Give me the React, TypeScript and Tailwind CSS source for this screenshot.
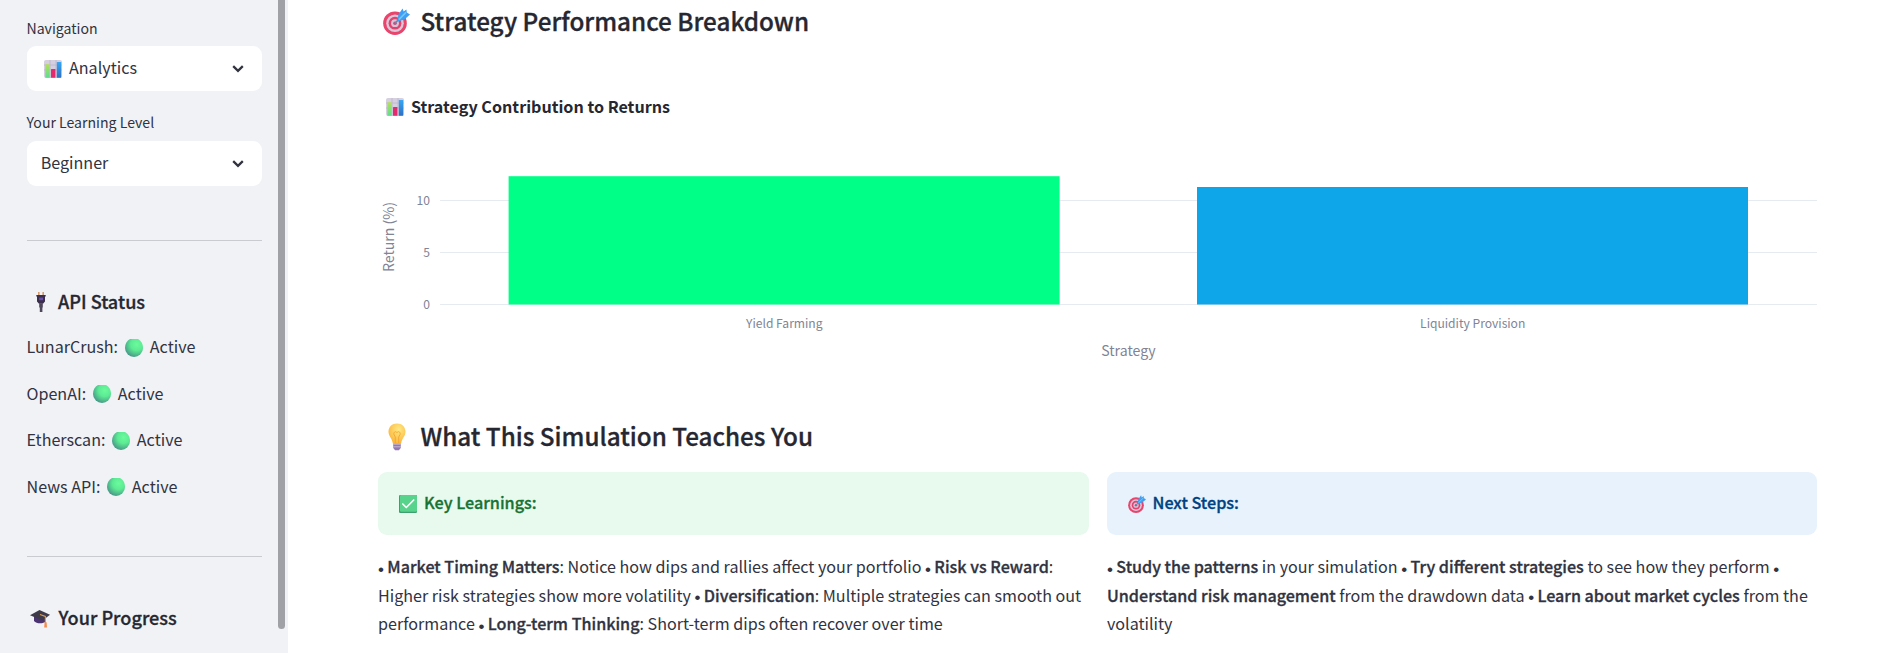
import React from "react";

function ChartEmoji() {
  return (
    <svg viewBox="0 0 18 18" className="size-[18px] shrink-0">
      <defs>
        <linearGradient id="bar-g" x1="0" y1="0" x2="0" y2="1"><stop offset="0" stopColor="#b5e05a" /><stop offset="1" stopColor="#5cdd92" /></linearGradient>
        <linearGradient id="bar-b" x1="0" y1="0" x2="0" y2="1"><stop offset="0" stopColor="#35a7f5" /><stop offset="1" stopColor="#2f6fc4" /></linearGradient>
      </defs>
      <rect x="0" y="0" width="18" height="18" rx="2" fill="#d5cfdf" />
      <path d="M6 0V18M12 0V18M0 5H18M0 10H18" stroke="#bdb5cb" strokeWidth=".8" />
      <rect x="1.3" y="4.2" width="4.4" height="13.6" rx=".6" fill="url(#bar-g)" />
      <rect x="7" y="9" width="4.4" height="8.8" rx=".6" fill="#e22a6c" />
      <rect x="12.8" y="2" width="4.4" height="15.8" rx=".6" fill="url(#bar-b)" />
    </svg>
  );
}

function TargetEmoji({ className }: { className: string }) {
  return (
    <svg viewBox="0 0 27 27" className={className}>
      <circle cx="12" cy="15.2" r="11.8" fill="#e8446c" />
      <circle cx="12" cy="15.2" r="8.8" fill="#dcc6d8" />
      <circle cx="12" cy="15.2" r="6.4" fill="#e0436f" />
      <circle cx="12" cy="15.2" r="3.9" fill="#d9c2d6" />
      <circle cx="12" cy="15.2" r="1.8" fill="#c0507c" />
      <path d="M12 15.2L18 9" stroke="#6f86ad" strokeWidth="1.6" />
      <path d="M14.4 13.4L15.4 6.4L19.6 .4L20.6 3.6L23.4 1.6L23.8 4.6L27 6.6L21.4 11.4Z" fill="#3f9ff2" />
      <path d="M15.8 11.6L23 4.4" stroke="#74c6fb" strokeWidth="1.5" />
    </svg>
  );
}

function BulbEmoji() {
  return (
    <svg viewBox="0 0 18 28" className="h-[28px] w-[18px] shrink-0">
      <defs>
        <radialGradient id="bulb" cx=".6" cy=".3" r=".75"><stop offset="0" stopColor="#ffe884" /><stop offset="1" stopColor="#fbb337" /></radialGradient>
      </defs>
      <path d="M9 .5C4 .5 .5 4 .5 8.7C.5 13.2 4 15 4.9 20.5H13.1C14 15 17.5 13.2 17.5 8.7C17.5 4 14 .5 9 .5Z" fill="url(#bulb)" />
      <path d="M7.3 20V14L5.8 11.2C5.6 8.8 8 7.8 9 9.6C10 7.8 12.4 8.8 12.2 11.2L10.7 14V20" fill="none" stroke="#f3a52f" strokeWidth=".9" />
      <path d="M5.2 20.5H12.8V24.5C12.8 25.5 11.5 26 11 27.3H7C6.5 26 5.2 25.5 5.2 24.5Z" fill="#9478b0" />
      <path d="M5.2 21.2H12.8M5.2 23.8H12.8" stroke="#cdbfd6" strokeWidth=".9" />
    </svg>
  );
}

function PlugEmoji() {
  return (
    <svg viewBox="0 0 10 20" className="h-[20px] w-[10px] shrink-0">
      <path d="M2.8 0V4M7.2 0V4" stroke="#d99a6c" strokeWidth="1.6" />
      <path d="M.3 3H9.7V4.5H9V9.5L7 11.8H3L1 9.5V4.5H.3Z" fill="#3b2f4c" />
      <rect x="3.2" y="5.6" width="3.8" height="2.6" fill="#6a4fae" />
      <path d="M3.2 11.5H6.8V15.5H6.4V20H3.8V15.5H3.2Z" fill="#4f475a" />
    </svg>
  );
}

function CapEmoji() {
  return (
    <svg viewBox="0 0 20 18" className="h-[18px] w-[20px] shrink-0">
      <path d="M4 7V11C6.5 14 13 14 16 11.5V7Z" fill="#4b3270" />
      <path d="M0 5.2L9.5 0L20 4.8L12.5 10.4Z" fill="#3f3a4a" />
      <path d="M10 4.4L15.4 6.4V13" fill="none" stroke="#dfa04e" strokeWidth="1.1" />
      <path d="M14.6 12.3H16.6L17 17.6H14.2Z" fill="#f58a4b" />
    </svg>
  );
}

function CheckEmoji() {
  return (
    <svg viewBox="0 0 18 18" className="size-[18px] shrink-0">
      <rect width="18" height="18" rx="1.3" fill="#3f9f70" />
      <rect x="1" width="17" height="16.8" rx="1.2" fill="#57d38c" />
      <path d="M3.8 9L7.3 12.5L14.7 5" fill="none" stroke="#fff" strokeWidth="1.7" strokeLinecap="round" strokeLinejoin="round" />
    </svg>
  );
}

function GreenDot() {
  return (
    <svg viewBox="0 0 18 18" className="size-[18px] shrink-0">
      <defs>
        <radialGradient id="dot" cx=".65" cy=".3" r=".75"><stop offset="0" stopColor="#6cfa9d" /><stop offset=".45" stopColor="#5ceb93" /><stop offset="1" stopColor="#479488" /></radialGradient>
      </defs>
      <path d="M5 0H13C16 1.5 18 5 18 9A9 9 0 0 1 0 9C0 5 2 1.5 5 0Z" fill="url(#dot)" />
    </svg>
  );
}

function Chevron() {
  return (
    <svg viewBox="0 0 12 8" className="mr-[18px] ml-auto h-[8px] w-[12px] shrink-0">
      <path d="M1.2 1.2L6 5.8L10.8 1.2" fill="none" stroke="#31333f" strokeWidth="2.3" />
    </svg>
  );
}

const statuses = [
  { name: "LunarCrush:", nameWidth: "w-[98px]" },
  { name: "OpenAI:", nameWidth: "w-[66px]" },
  { name: "Etherscan:", nameWidth: "w-[85px]" },
  { name: "News API:", nameWidth: "w-[80px]" },
];

const semibold = "font-medium [-webkit-text-stroke:0.3px_currentColor]";

function Sidebar() {
  return (
    <aside className="flex h-full w-[288px] shrink-0 bg-[#f0f2f6]">
      <div className="ml-[27px] flex w-[235px] flex-col whitespace-nowrap">
        <div className="-ml-[0.5px] mt-[17px] h-[23px] text-[14.1px] leading-[23px]">Navigation</div>
        <div className="mt-[6px] flex h-[45px] items-center rounded-[9px] bg-white pl-[17px]">
          <ChartEmoji />
          <span className="ml-[7px] pb-[2px]">Analytics</span>
          <Chevron />
        </div>
        <div className="-ml-[0.5px] mt-[20px] h-[23px] text-[14.1px] leading-[23px]">Your Learning Level</div>
        <div className="mt-[7px] flex h-[45px] items-center rounded-[9px] bg-white pl-[13.7px]">
          <span className="pb-[2px]">Beginner</span>
          <Chevron />
        </div>
        <div className="mt-[54px] h-px bg-[#c9cbd1]" />
        <h3 className="mt-[46px] flex h-[30px] items-center pl-[8.5px] text-[18.1px] text-[#262730]">
          <PlugEmoji />
          <span className={`ml-[12.5px] pb-[2px] ${semibold}`}>API Status</span>
        </h3>
        <div className="mt-[16px] flex flex-col gap-[17.6px]">
          {statuses.map((s) => (
            <div key={s.name} className="-ml-[0.5px] flex h-[29px] items-center">
              <span className={`pb-[2px] ${s.nameWidth}`}>{s.name}</span>
              <GreenDot />
              <span className="ml-[7.3px] pb-[2px]">Active</span>
            </div>
          ))}
        </div>
        <div className="mt-[54.2px] h-px bg-[#c9cbd1]" />
        <h3 className="mt-[47px] flex h-[30px] items-center pl-[3px] text-[18.1px] text-[#262730]">
          <CapEmoji />
          <span className={`ml-[8.5px] pb-[3px] ${semibold}`}>Your Progress</span>
        </h3>
      </div>
      <div className="ml-[16px] h-[629px] w-[7px] rounded-b-[4px] bg-[#a0a1a6]" />
    </aside>
  );
}

function ReturnsChart() {
  return (
    <svg width="1439" height="240" viewBox="378 130 1439 240" className="block" fill="#808495">
      <g fill="#e6eaf1">
        <rect x="440" y="200" width="1377" height="1" />
        <rect x="440" y="252" width="1377" height="1" />
        <rect x="440" y="304" width="1377" height="1" />
      </g>
      <rect x="508.6" y="176.2" width="551" height="128.3" fill="#00ff87" />
      <rect x="1197" y="187" width="551" height="117.5" fill="#0ea5e9" />
      <g fontSize="12.1">
        <text x="430" y="205" textAnchor="end">10</text>
        <text x="430" y="257" textAnchor="end">5</text>
        <text x="430" y="309" textAnchor="end">0</text>
        <text x="784.3" y="328" textAnchor="middle">Yield Farming</text>
        <text x="1472.7" y="328" textAnchor="middle">Liquidity Provision</text>
      </g>
      <g fontSize="14.1">
        <text x="1128.5" y="356" textAnchor="middle">Strategy</text>
        <text transform="translate(394 237) rotate(-90)" textAnchor="middle">Return (%)</text>
      </g>
    </svg>
  );
}

function B({ children }: { children: React.ReactNode }) {
  return <strong className={semibold}>{children}</strong>;
}

function Dot() {
  return <span className="inline-block w-[5.7px] align-[-1.5px] font-['Liberation_Sans'] text-[17px] leading-none">•</span>;
}

export default function App() {
  return (
    <div className="flex h-[653px] w-[1902px] overflow-hidden bg-white font-['Noto_Sans_CJK_SC',sans-serif] text-[16.12px] leading-[28.8px] text-[#31333f]">
      <Sidebar />
      <main className="ml-[90px] flex w-[1439px] flex-col">
        <h2 className="mt-[3px] flex h-[37px] items-center pl-[5px] text-[24.25px] text-[#262730]">
          <TargetEmoji className="size-[27px] shrink-0" />
          <span className={`ml-[10.5px] pb-[1px] ${semibold}`}>Strategy Performance Breakdown</span>
        </h2>
        <div className="mt-[53px] flex h-[28px] items-center pl-[8px] text-[16.13px] font-bold text-[#262730]">
          <ChartEmoji />
          <span className="ml-[7px] pb-[2px]">Strategy Contribution to Returns</span>
        </div>
        <div className="mt-[9px]">
          <ReturnsChart />
        </div>
        <h2 className="mt-[49px] flex h-[36px] items-center pl-[9.5px] text-[24.25px] text-[#262730]">
          <BulbEmoji />
          <span className={`ml-[15px] pb-[2px] ${semibold}`}>What This Simulation Teaches You</span>
        </h2>
        <div className="mt-[17px] flex gap-[18px]">
          <section className="w-[711px]">
            <div className="flex h-[63px] items-center rounded-[9px] bg-[#e8f9ee] pl-[21px] text-[#177233]">
              <CheckEmoji />
              <span className={`ml-[7px] pb-[2px] text-[16.2px] ${semibold}`}>Key Learnings:</span>
            </div>
            <p className="mt-[17px] leading-[28.5px] whitespace-nowrap">
              <Dot /> <B>Market Timing Matters</B>: Notice how dips and rallies affect your portfolio <Dot /> <B>Risk vs Reward</B>:<br />
              Higher risk strategies show more volatility <Dot /> <B>Diversification</B>: Multiple strategies can smooth out<br />
              performance <Dot /> <B>Long-term Thinking</B>: Short-term dips often recover over time
            </p>
          </section>
          <section className="w-[710px]">
            <div className="flex h-[63px] items-center rounded-[9px] bg-[#e8f2fc] pl-[20.5px] text-[#004280]">
              <TargetEmoji className="size-[18px] shrink-0" />
              <span className={`ml-[7px] pb-[2px] text-[16.2px] ${semibold}`}>Next Steps:</span>
            </div>
            <p className="mt-[17px] leading-[28.5px] whitespace-nowrap">
              <Dot /> <B>Study the patterns</B> in your simulation <Dot /> <B>Try different strategies</B> to see how they perform <Dot /><br />
              <B>Understand risk management</B> from the drawdown data <Dot /> <B>Learn about market cycles</B> from the<br />
              volatility
            </p>
          </section>
        </div>
      </main>
    </div>
  );
}
